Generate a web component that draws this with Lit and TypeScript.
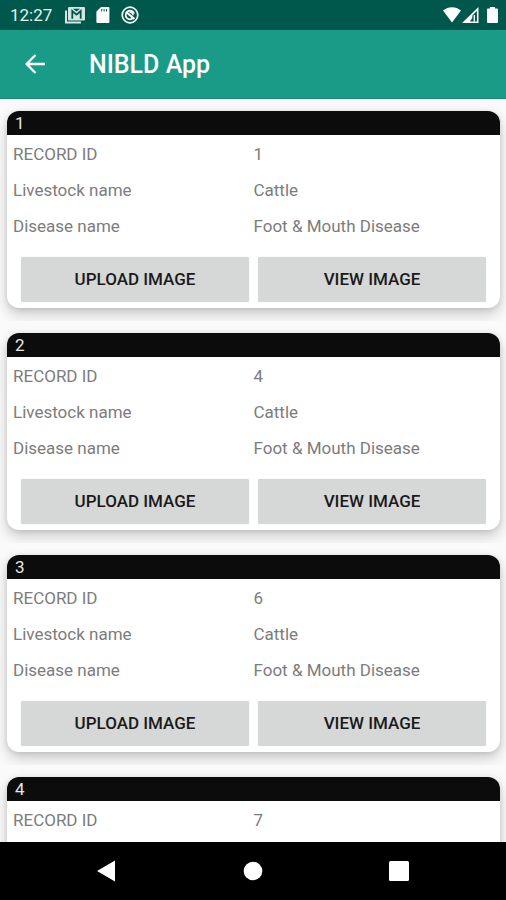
import { LitElement, html, css } from "lit";
import { customElement, property } from "lit/decorators.js";

interface LivestockRecord {
  id: number;
  livestock: string;
  disease: string;
}

const records: LivestockRecord[] = [1, 4, 6, 7].map((id) => ({
  id,
  livestock: "Cattle",
  disease: "Foot & Mouth Disease",
}));

@customElement("status-bar")
class StatusBar extends LitElement {
  static styles = css`
    :host {
      display: flex;
      align-items: center;
      justify-content: space-between;
      height: 30px;
      padding: 0 8px 0 10px;
      box-sizing: border-box;
      background: #00574b;
      color: #e8f2f0;
      font-size: 17px;
      line-height: 30px;
    }
    .left,
    .right {
      display: flex;
      align-items: center;
    }
    .time {
      margin-right: 13px;
    }
    .notices {
      display: flex;
      align-items: center;
      gap: 11px;
    }
    .battery {
      margin-left: 8px;
    }
    svg {
      display: block;
    }
  `;

  render() {
    return html`
      <div class="left">
        <span class="time">12:27</span>
        <div class="notices">
          <svg width="20" height="18" viewBox="0 0 20 18">
            <path d="M1 4.5V16.5H16" fill="none" stroke="#d5e5e2" stroke-width="2" />
            <rect x="3" y="1" width="17" height="13.6" rx="1" fill="#d5e5e2" />
            <path d="M7.3 12.8V5L11.5 8.6L15.7 5V12.8" fill="none" stroke="#00574b" stroke-width="1.8" />
            <path d="M8 2.8H15L11.5 5.6Z" fill="#00574b" />
          </svg>
          <svg width="14" height="16" viewBox="0 0 14 16">
            <path fill="#fff" fill-rule="evenodd" d="M5 0H12.4Q13.4 0 13.4 1V15Q13.4 16 12.4 16H1.4Q.4 16 .4 15V4.6ZM5.2 2V4.6H6.2V2ZM7.6 2V4.6H8.6V2ZM10 2V4.6H11V2Z" />
          </svg>
          <svg width="18" height="18" viewBox="0 0 18 18" fill="none" stroke="#fff">
            <circle cx="9" cy="9" r="7.8" stroke-width="1.7" />
            <path d="M12.6 11.6A4.4 4.4 0 1 1 13.2 7.5" stroke-width="1.7" />
            <path d="M5.2 6L13.4 13" stroke-width="2.2" />
            <path d="M8.5 6.2A3 3 0 0 1 12 9.3" stroke-width="1.6" />
          </svg>
        </div>
      </div>
      <div class="right">
        <svg width="18" height="16" viewBox="0 0 18 16">
          <path fill="#fff" d="M0 3.6C5-1 13-1 18 3.6L9 15.6Z" />
        </svg>
        <svg width="18" height="16" viewBox="0 0 18 16">
          <path fill="#fff" fill-rule="evenodd" d="M17.5 0V16H1ZM15.9 4L11.3 8.6V11L9 14.4H15.9Z" />
          <path fill="#fff" d="M12.6 8H14V14.5H12.6Z" />
        </svg>
        <svg class="battery" width="11" height="16" viewBox="0 0 11 16">
          <path fill="#fff" d="M3 0H8V1.5H10Q11 1.5 11 2.5V15Q11 16 10 16H1Q0 16 0 15V2.5Q0 1.5 1 1.5H3Z" />
        </svg>
      </div>
    `;
  }
}

@customElement("app-bar")
class AppBar extends LitElement {
  static styles = css`
    :host {
      display: flex;
      align-items: center;
      height: 69px;
      padding: 0 20px;
      box-sizing: border-box;
      background: #199b87;
      border-bottom: 1px solid #128a77;
      color: #fff;
    }
    .back {
      width: 30px;
      height: 40px;
      padding: 0;
      border: 0;
      background: none;
      display: grid;
      place-items: center;
    }
    .title {
      margin: 2px 0 0 39px;
      font-size: 25px;
      line-height: 32px;
      font-weight: 500;
    }
  `;

  render() {
    return html`
      <button class="back" aria-label="Back">
        <svg width="20" height="20" viewBox="0 0 20 20" fill="none" stroke="#fff" stroke-width="2.3">
          <path d="M20 10H2M10.5 1L1.6 10L10.5 19" />
        </svg>
      </button>
      <h1 class="title">NIBLD App</h1>
    `;
  }
}

@customElement("record-card")
class RecordCard extends LitElement {
  @property({ type: Number }) position = 0;
  @property({ attribute: false }) record!: LivestockRecord;

  static styles = css`
    :host {
      display: block;
      padding: 12px 6px 13px 7px;
      overflow: hidden;
      background: #fafafa;
    }
    .card {
      background: #fff;
      border-radius: 12px;
      overflow: hidden;
      box-shadow: 0 6px 14px rgba(0, 0, 0, 0.2), 0 1px 5px rgba(0, 0, 0, 0.1);
    }
    .number {
      margin: 0;
      height: 24px;
      padding: 0 8px;
      background: #0c0c0c;
      color: #e6e6e6;
      font-size: 17px;
      line-height: 25px;
      font-weight: 400;
    }
    .fields {
      margin: 0;
      padding: 1px 6px 0;
    }
    .field {
      display: grid;
      grid-template-columns: 1fr 1fr;
      font-size: 17px;
      line-height: 36px;
      color: #7c7c7c;
    }
    .field dt,
    .field dd {
      margin: 0;
    }
    .actions {
      display: grid;
      grid-template-columns: 1fr 1fr;
      gap: 9px;
      padding: 13px 14px 6px;
    }
    .action {
      height: 45px;
      padding: 0 0 2px;
      border: 0;
      border-radius: 2px;
      background: #d6d7d7;
      box-shadow: 0 0 1px #c4c5c5;
      color: #1a1a1a;
      font: 500 17px/20px Roboto, sans-serif;
      text-transform: uppercase;
    }
  `;

  render() {
    const { id, livestock, disease } = this.record;
    const fields = [
      ["RECORD ID", id],
      ["Livestock name", livestock],
      ["Disease name", disease],
    ];
    return html`
      <article class="card">
        <h2 class="number">${this.position}</h2>
        <dl class="fields">
          ${fields.map(
            ([label, value]) => html`<div class="field"><dt>${label}</dt><dd>${value}</dd></div>`
          )}
        </dl>
        <div class="actions">
          <button class="action">Upload image</button>
          <button class="action">View image</button>
        </div>
      </article>
    `;
  }
}

@customElement("system-nav")
class SystemNav extends LitElement {
  static styles = css`
    :host {
      display: flex;
      justify-content: center;
      gap: 98px;
      height: 58px;
      background: #000;
    }
    .key {
      width: 48px;
      padding: 0;
      border: 0;
      background: none;
      display: grid;
      place-items: center;
    }
  `;

  render() {
    return html`
      <button class="key" aria-label="Back">
        <svg width="20" height="22" viewBox="0 0 20 22"><path fill="#fff" d="M0 11L18 .5V21.5Z" /></svg>
      </button>
      <button class="key" aria-label="Home">
        <svg width="20" height="20" viewBox="0 0 20 20"><circle cx="10" cy="10" r="9.3" fill="#fff" /></svg>
      </button>
      <button class="key" aria-label="Overview">
        <svg width="20" height="20" viewBox="0 0 20 20"><rect width="20" height="20" rx="1.5" fill="#fff" /></svg>
      </button>
    `;
  }
}

@customElement("app-root")
class AppRoot extends LitElement {
  static styles = css`
    :host {
      display: flex;
      flex-direction: column;
      height: 100vh;
      font-family: Roboto, sans-serif;
      background: #fafafa;
    }
    status-bar,
    app-bar,
    system-nav {
      flex: none;
    }
    .list {
      flex: 1;
      min-height: 0;
      overflow-y: auto;
      scrollbar-width: none;
    }
  `;

  render() {
    return html`
      <status-bar></status-bar>
      <app-bar></app-bar>
      <main class="list">
        ${records.map(
          (record, i) => html`<record-card .position=${i + 1} .record=${record}></record-card>`
        )}
      </main>
      <system-nav></system-nav>
    `;
  }
}
